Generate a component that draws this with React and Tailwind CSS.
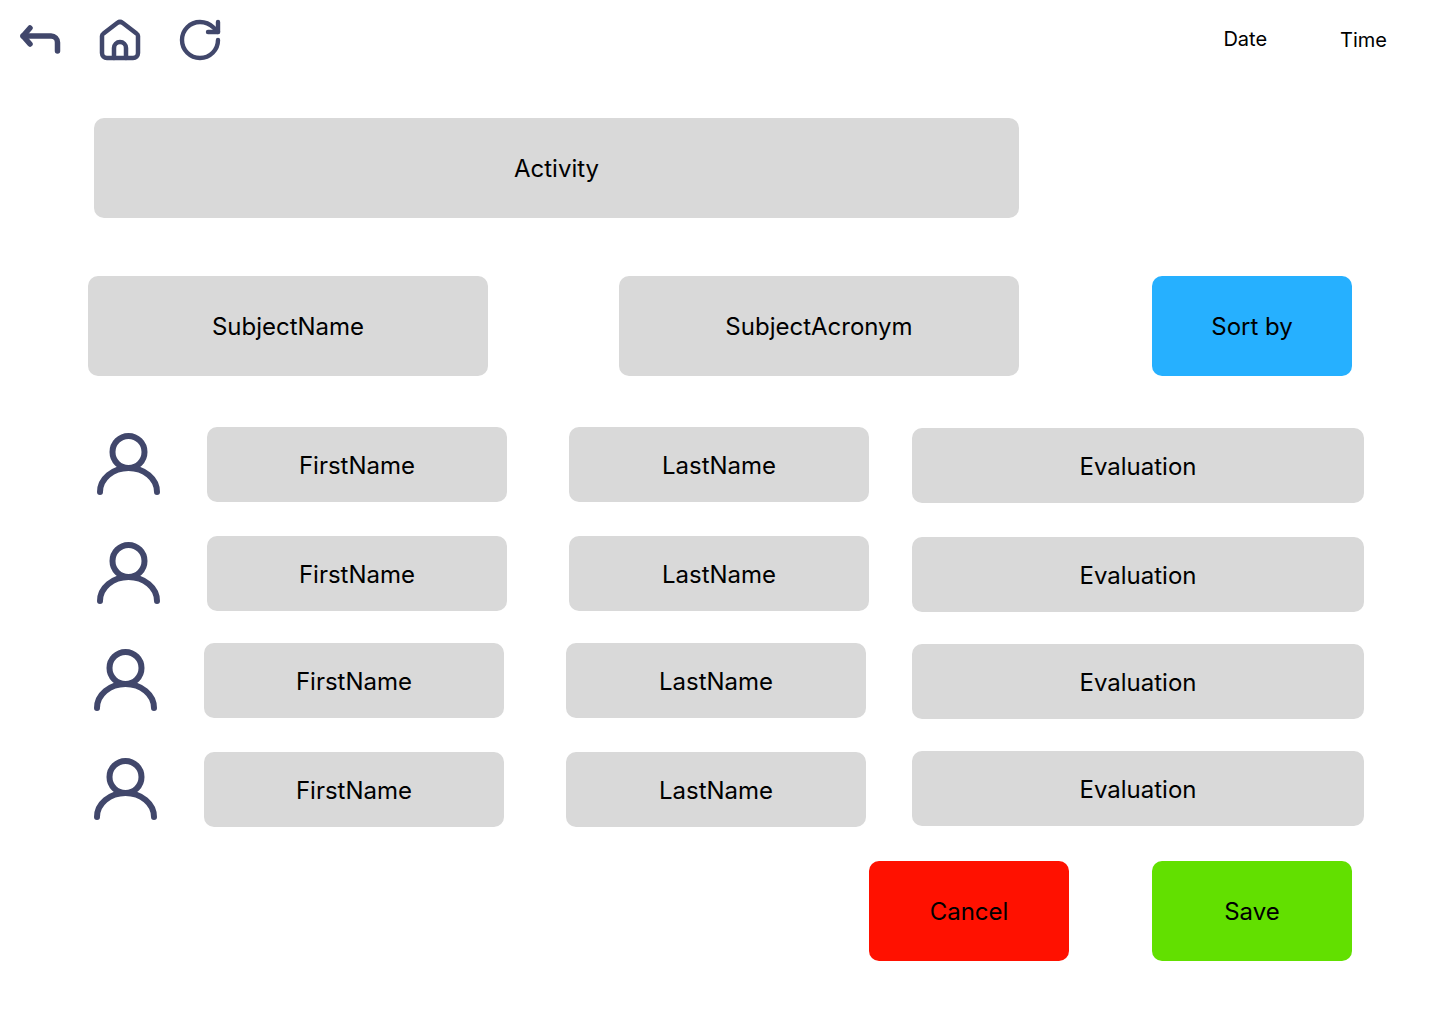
import { RotateCw } from "lucide-react";

const ICON = "#41476b";

function Box({ className, children }) {
  return (
    <div className={`flex shrink-0 items-center justify-center rounded-[10px] pt-[2px] text-[24px] text-black ${className}`}>
      {children}
    </div>
  );
}

function BackIcon() {
  return (
    <svg width="48" height="48" viewBox="0 0 48 48" fill="none" stroke={ICON} strokeWidth="5.5" strokeLinecap="round" strokeLinejoin="round">
      <path d="M14 12 L7 20 L14 28" />
      <path d="M7 20 H35 a6.5 6.5 0 0 1 6.5 6.5 V35" />
    </svg>
  );
}

function HomeIcon() {
  return (
    <svg width="48" height="48" viewBox="0 0 48 48" fill="none" stroke={ICON} strokeWidth="4.5" strokeLinecap="round" strokeLinejoin="round">
      <path d="M6 20 Q6 18.5 7.5 17.5 L21.5 6.8 Q24 5 26.5 6.8 L40.5 17.5 Q42 18.5 42 20 V37 a5 5 0 0 1 -5 5 H11 a5 5 0 0 1 -5 -5 Z" />
      <path d="M18 42 V32 a6 6 0 0 1 12 0 V42" />
    </svg>
  );
}

function PersonIcon({ className }) {
  return (
    <svg className={`shrink-0 ${className}`} width="64" height="64" viewBox="0 0 64 64" fill="none" stroke={ICON} strokeWidth="6" strokeLinecap="round">
      <circle cx="31.5" cy="19" r="16" />
      <path d="M3 59 a28.5 24 0 0 1 57 0" />
    </svg>
  );
}

export default function App() {
  return (
    <main className="h-[1024px] w-[1440px] overflow-hidden bg-white font-['Inter',sans-serif]">
      {/* Top bar */}
      <header className="flex items-start pl-4 pr-[53px] pt-4">
        <div className="flex gap-8">
          <BackIcon />
          <HomeIcon />
          <RotateCw size={48} color={ICON} strokeWidth={2.2} />
        </div>
        <div className="ml-auto flex gap-[73px] text-[20px] leading-[48px] text-black">
          <span className="-mt-px">Date</span>
          <span>Time</span>
        </div>
      </header>

      <Box className="ml-[94px] mt-[54px] h-[100px] w-[925px] bg-[#d9d9d9]">Activity</Box>

      <div className="ml-[88px] mt-[58px] flex">
        <Box className="h-[100px] w-[400px] bg-[#d9d9d9]">SubjectName</Box>
        <Box className="ml-[131px] h-[100px] w-[400px] bg-[#d9d9d9]">SubjectAcronym</Box>
        <Box className="ml-[133px] h-[100px] w-[200px] bg-[#26b0ff]">Sort by</Box>
      </div>

      {/* Students */}
      <div className="ml-[97px] mt-[51px] flex items-start">
        <PersonIcon className="mt-[6px]" />
        <Box className="ml-[46px] h-[75px] w-[300px] bg-[#d9d9d9]">FirstName</Box>
        <Box className="ml-[62px] h-[75px] w-[300px] bg-[#d9d9d9]">LastName</Box>
        <Box className="ml-[43px] mt-px h-[75px] w-[452px] bg-[#d9d9d9]">Evaluation</Box>
      </div>

      <div className="ml-[97px] mt-[33px] flex items-start">
        <PersonIcon className="mt-[6px]" />
        <Box className="ml-[46px] h-[75px] w-[300px] bg-[#d9d9d9]">FirstName</Box>
        <Box className="ml-[62px] h-[75px] w-[300px] bg-[#d9d9d9]">LastName</Box>
        <Box className="ml-[43px] mt-px h-[75px] w-[452px] bg-[#d9d9d9]">Evaluation</Box>
      </div>

      <div className="ml-[94px] mt-[31px] flex items-start">
        <PersonIcon className="mt-[6px]" />
        <Box className="ml-[46px] h-[75px] w-[300px] bg-[#d9d9d9]">FirstName</Box>
        <Box className="ml-[62px] h-[75px] w-[300px] bg-[#d9d9d9]">LastName</Box>
        <Box className="ml-[46px] mt-px h-[75px] w-[452px] bg-[#d9d9d9]">Evaluation</Box>
      </div>

      <div className="ml-[94px] mt-8 flex items-start">
        <PersonIcon className="mt-[7px]" />
        <Box className="ml-[46px] mt-px h-[75px] w-[300px] bg-[#d9d9d9]">FirstName</Box>
        <Box className="ml-[62px] mt-px h-[75px] w-[300px] bg-[#d9d9d9]">LastName</Box>
        <Box className="ml-[46px] h-[75px] w-[452px] bg-[#d9d9d9]">Evaluation</Box>
      </div>

      <div className="ml-[869px] mt-[34px] flex">
        <Box className="h-[100px] w-[200px] bg-[#ff1100]">Cancel</Box>
        <Box className="ml-[83px] h-[100px] w-[200px] bg-[#62e000]">Save</Box>
      </div>
    </main>
  );
}
